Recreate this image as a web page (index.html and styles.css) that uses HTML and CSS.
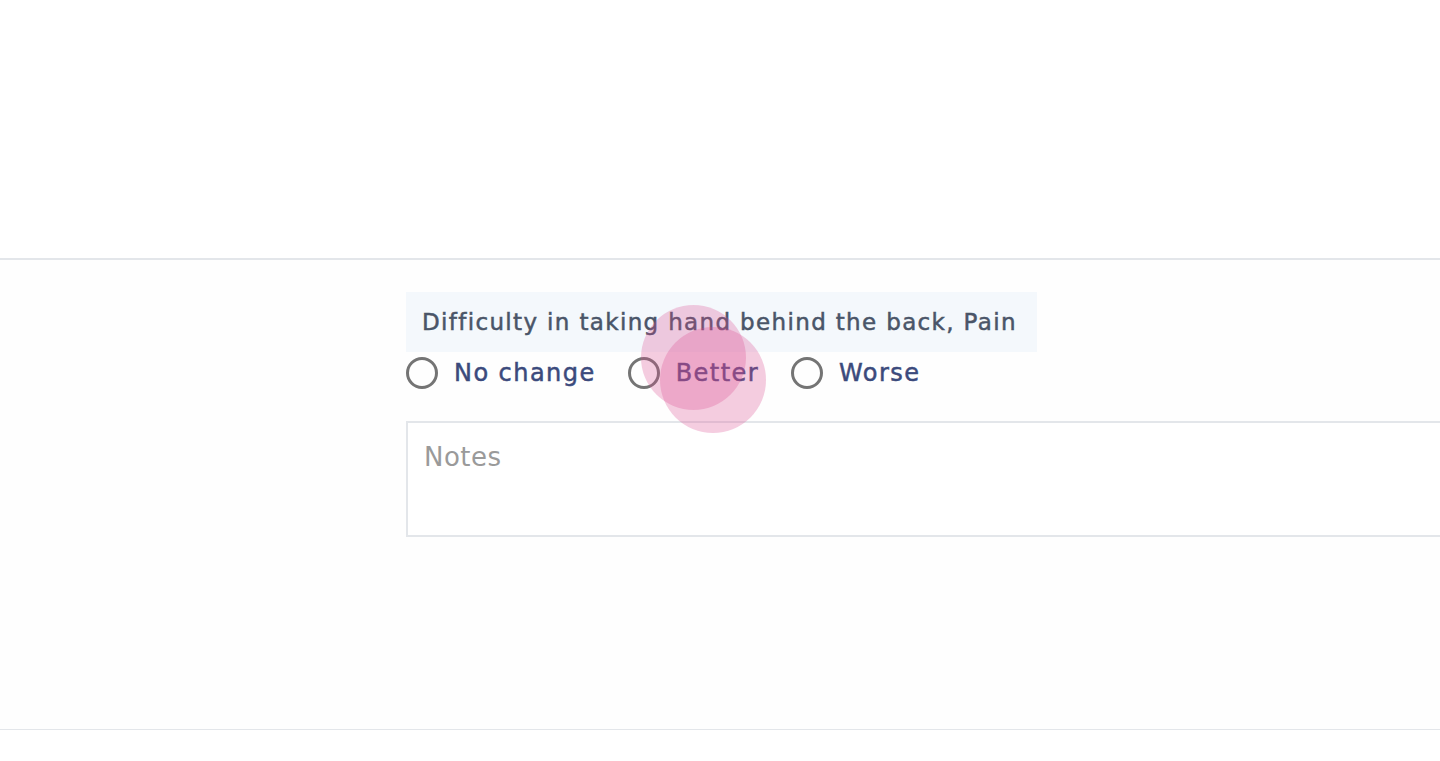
FILE: index.html
```html
<!DOCTYPE html>
<html lang="en">
<head>
<meta charset="utf-8">
<title>Assessment</title>
<link rel="stylesheet" href="styles.css">
</head>
<body>
<div class="top"></div>
<section class="question">
  <div class="spacer"></div>
  <div class="content">
    <div class="label">Difficulty in taking hand behind the back, Pain</div>
    <div class="options">
      <label class="option"><span class="radio"></span><span class="text">No change</span></label>
      <label class="option option-active"><span class="radio"></span><span class="text">Better</span>
        <span class="ripple ripple-a"></span><span class="ripple ripple-b"></span></label>
      <label class="option"><span class="radio"></span><span class="text">Worse</span></label>
    </div>
    <div class="notes">Notes</div>
  </div>
</section>
</body>
</html>
```
FILE: styles.css
```css
html, body {
  margin: 0;
  padding: 0;
  background: #ffffff;
  overflow: hidden;
}
body {
  font-family: "DejaVu Sans", "Open Sans", sans-serif;
  width: 1440px;
  height: 761px;
}
.top {
  height: 258px;
  border-bottom: 2px solid #e3e6ea;
}
.question {
  display: flex;
  height: 469px;
  border-bottom: 1px solid #e3e6ea;
  background: #fefefe;
}
.spacer {
  width: 406px;
  flex: none;
}
.content {
  flex: 1;
  padding-top: 32px;
  display: flex;
  flex-direction: column;
  align-items: flex-start;
}
.label {
  background: #f4f8fc;
  color: #4a5568;
  font-size: 23px;
  letter-spacing: 1.35px;
  height: 60px;
  line-height: 60px;
  padding: 0 16px;
  width: 599px;
  white-space: nowrap;
  overflow: hidden;
  -webkit-text-stroke: 0.5px #4a5568;
}
.options {
  display: flex;
  align-items: center;
  gap: 32px;
  height: 42px;
}
.option {
  position: relative;
  display: flex;
  align-items: center;
  gap: 16px;
}
.radio {
  width: 26px;
  height: 26px;
  border: 3px solid #747474;
  border-radius: 50%;
  flex: none;
}
.text {
  font-size: 24px;
  letter-spacing: 1.45px;
  color: #3b4a7c;
  -webkit-text-stroke: 0.5px #3b4a7c;
}
.ripple {
  position: absolute;
  border-radius: 50%;
  background: rgba(219, 76, 144, 0.28);
  pointer-events: none;
}
.ripple-a {
  width: 105px;
  height: 105px;
  left: 13px;
  top: -52px;
}
.ripple-b {
  width: 106px;
  height: 106px;
  left: 32px;
  top: -30px;
}
.notes {
  margin-top: 27px;
  box-sizing: border-box;
  width: 1100px;
  height: 116px;
  border: 2px solid #e3e6ea;
  border-right: none;
  background: #ffffff;
  padding: 19px 16px;
  font-size: 26px;
  letter-spacing: 0.5px;
  color: #9a9a9a;
}
```
